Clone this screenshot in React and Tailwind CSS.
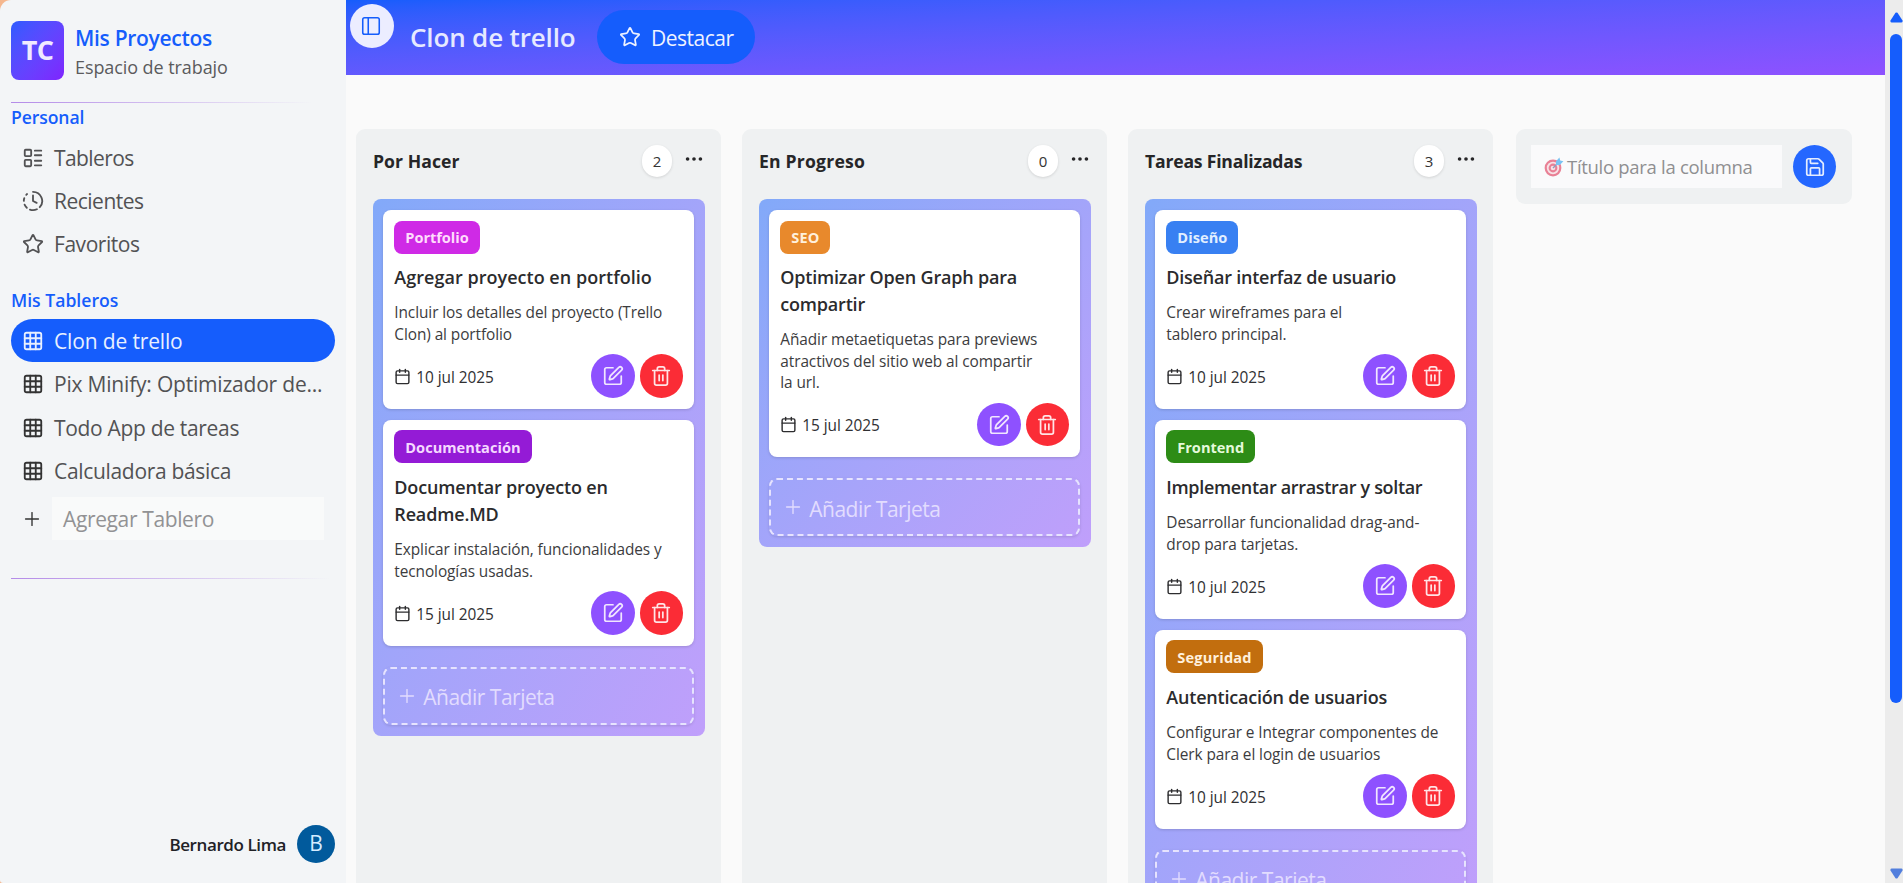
import React from 'react';
import {
  LayoutList,
  ClockFading,
  Star,
  Grid3x3,
  Plus,
  PanelLeft,
  Calendar,
  SquarePen,
  Trash2,
  Save,
  Ellipsis,
} from 'lucide-react';

const columns = [
  {
    title: 'Por Hacer',
    tracking: 'tracking-[0.05px]',
    count: 2,
    cards: [
      { tag: 'Portfolio', color: 'bg-[#cf2ae6]', tagText: 'text-[#ffdcfc] tracking-[-0.05px]', tracking: 'tracking-[0.03px]', title: ['Agregar proyecto en portfolio'], desc: ['Incluir los detalles del proyecto (Trello', 'Clon) al portfolio'], date: '10 jul 2025' },
      { tag: 'Documentación', color: 'bg-[#941bd6]', tagText: 'text-[#f5d9ff] tracking-[0px]', tracking: 'tracking-[-0.16px]', title: ['Documentar proyecto en', 'Readme.MD'], desc: ['Explicar instalación, funcionalidades y', 'tecnologías usadas.'], date: '15 jul 2025' },
    ],
  },
  {
    title: 'En Progreso',
    tracking: 'tracking-[0.2px]',
    count: 0,
    cards: [
      { tag: 'SEO', color: 'bg-[#e8892c]', tagText: 'text-[#fff0dc] tracking-[0.1px]', tracking: 'tracking-[-0.19px]', title: ['Optimizar Open Graph para', 'compartir'], desc: ['Añadir metaetiquetas para previews', 'atractivos del sitio web al compartir', 'la url.'], date: '15 jul 2025' },
    ],
  },
  {
    title: 'Tareas Finalizadas',
    tracking: 'tracking-[-0.2px]',
    count: 3,
    cards: [
      { tag: 'Diseño', color: 'bg-[#3880f2]', tagText: 'text-[#e2efff] tracking-[0.05px]', tracking: 'tracking-[-0.22px]', title: ['Diseñar interfaz de usuario'], desc: ['Crear wireframes para el', 'tablero principal.'], date: '10 jul 2025' },
      { tag: 'Frontend', color: 'bg-[#2d8c16]', tagText: 'text-[#e4fadc] tracking-[-0.03px]', tracking: 'tracking-[-0.32px]', title: ['Implementar arrastrar y soltar'], desc: ['Desarrollar funcionalidad drag-and-', 'drop para tarjetas.'], date: '10 jul 2025' },
      { tag: 'Seguridad', color: 'bg-[#c26e0e]', tagText: 'text-[#fff0dc] tracking-[0.18px]', tracking: 'tracking-[-0.2px]', title: ['Autenticación de usuarios'], desc: ['Configurar e Integrar componentes de', 'Clerk para el login de usuarios'], date: '10 jul 2025' },
    ],
  },
];

function NavItem({ icon: Icon, label, active, dark, tracking = 'tracking-[-0.45px]' }) {
  return (
    <li className={`flex h-[43px] w-[324px] items-center rounded-full pl-[11px] ${active ? 'bg-[#155dfc] text-[#e8f0ff]' : 'text-[#525254]'}`}>
      <Icon size={22} className={`shrink-0 ${dark ? 'text-[#333]' : ''}`} />
      <span className={`ml-[10px] whitespace-nowrap text-[21px] leading-[30px] ${tracking}`}>{label}</span>
    </li>
  );
}

function Card({ card }) {
  return (
    <article className="flex flex-col rounded-[8px] bg-white p-[11px] pt-[10.5px] shadow-[0_1px_3px_rgba(0,0,0,0.15)]">
      <span className={`flex h-[33px] items-center self-start rounded-[8px] px-[11px] pt-px text-[14.6px] font-bold ${card.color} ${card.tagText}`}>
        {card.tag}
      </span>
      <h3 className={`mt-[10.5px] text-[18px] font-semibold leading-[27px] text-[#2b2b2d] ${card.tracking}`}>
        {card.title.map((line) => <span key={line} className="block whitespace-nowrap">{line}</span>)}
      </h3>
      <p className="mt-[11.3px] text-[15.4px] leading-[21.4px] tracking-[-0.08px] text-[#3c3c3e]">
        {card.desc.map((line) => <span key={line} className="block whitespace-nowrap">{line}</span>)}
      </p>
      <div className="mt-[9.2px] flex h-[43.7px] items-center">
        <Calendar size={17} className="text-[#2d2d2f]" />
        <time className="ml-[5px] mt-[3px] text-[15.4px] leading-none tracking-[-0.05px] text-[#303032]">{card.date}</time>
        <button className="ml-auto flex size-[43.7px] items-center justify-center rounded-full bg-[#8e51ff] text-[#f0e6ff]">
          <SquarePen size={22} strokeWidth={1.9} />
        </button>
        <button className="ml-[5px] flex size-[43.5px] items-center justify-center rounded-full bg-[#fb2c36] text-[#ffe4e6]">
          <Trash2 size={22} strokeWidth={1.9} />
        </button>
      </div>
    </article>
  );
}

function Column({ column }) {
  return (
    <section className="w-[365px] shrink-0 self-stretch rounded-t-[9px] bg-[#eff1f2] px-[17px] pr-[16px] pt-[16px]">
      <header className="flex h-[32px] items-center">
        <h2 className={`mt-px whitespace-nowrap text-[17.6px] font-bold text-[#262628] ${column.tracking}`}>{column.title}</h2>
        <span className="ml-auto flex h-[32px] w-[30px] items-center justify-center rounded-full bg-white pt-px text-[15px] font-medium text-[#333] shadow-[0_1px_3px_rgba(0,0,0,0.12)]">
          {column.count}
        </span>
        <Ellipsis size={22} className="-mt-[5px] ml-[11px] text-[#262628]" />
      </header>
      <div className="mt-[22px] flex flex-col gap-[11px] rounded-[8px] bg-linear-to-br from-[#82a9f9] to-[#c09ffb] p-[11px] pl-[10.3px]">
        {column.cards.map((card) => <Card key={card.title[0]} card={card} />)}
        <button className="mt-[10px] flex h-[58px] shrink-0 items-center rounded-[8px] border-2 border-dashed border-[#e6e3fe] pl-[11px] text-[#e2dcfe] shadow-[0_1px_3px_rgba(0,0,0,0.12)]">
          <Plus size={22} strokeWidth={1.5} />
          <span className="ml-[5px] mt-[4px] text-[21px] leading-none tracking-[-0.5px]">Añadir Tarjeta</span>
        </button>
      </div>
    </section>
  );
}

function TargetIcon() {
  return (
    <svg viewBox="0 0 20 20" className="size-[20px] shrink-0 opacity-65">
      <circle cx="9" cy="11" r="8.4" fill="#e0405f" />
      <circle cx="9" cy="11" r="6.2" fill="#f6d6dc" />
      <circle cx="9" cy="11" r="4.4" fill="#e0405f" />
      <circle cx="9" cy="11" r="2.3" fill="#f6d6dc" />
      <path d="M9 11 15 5" stroke="#5a6b9a" strokeWidth="1.4" />
      <path d="M12 8V4.200L15.400.5l.8 3 3.200.8L15.800 8Z" fill="#35a5ee" />
    </svg>
  );
}

function Sidebar() {
  return (
    <aside className="flex h-full w-[346px] shrink-0 flex-col rounded-tl-[11px] rounded-bl-[3px] bg-[#f3f5f7] pl-[11px]">
      <div className="flex pt-[21px]">
        <div className="flex h-[59px] w-[53px] items-center justify-center rounded-[8px] bg-linear-to-br from-[#2b5bff] to-[#7f22fe] text-[27px] font-bold tracking-[-0.6px] text-[#f0eaff]">
          TC
        </div>
        <div className="ml-[11px] whitespace-nowrap">
          <p className="mt-[2px] text-[21px] font-semibold leading-[30px] tracking-[-0.3px] text-[#155dfc]">Mis Proyectos</p>
          <p className="mt-px text-[18px] leading-[26px] tracking-[-0.08px] text-[#5b5b5d]">Espacio de trabajo</p>
        </div>
      </div>
      <div className="mt-[22px] h-px w-[302px] bg-linear-to-r from-[#b48be8] to-transparent" />
      <h4 className="mt-px text-[17.6px] font-semibold leading-[26px] tracking-[-0.1px] text-[#155dfc]">Personal</h4>
      <ul className="mt-[6px]">
        <NavItem icon={LayoutList} label="Tableros" tracking="tracking-[-0.6px]" />
        <NavItem icon={ClockFading} label="Recientes" tracking="tracking-[-0.5px]" />
        <NavItem icon={Star} label="Favoritos" />
      </ul>
      <h4 className="mt-[22px] text-[17.6px] font-semibold leading-[26px] tracking-[0px] text-[#155dfc]">Mis Tableros</h4>
      <ul className="mt-[6px] flex flex-col gap-[0.5px]">
        <NavItem icon={Grid3x3} label="Clon de trello" active tracking="tracking-[-0.15px]" />
        <NavItem icon={Grid3x3} label="Pix Minify: Optimizador de..." dark tracking="tracking-[-0.2px]" />
        <NavItem icon={Grid3x3} label="Todo App de tareas" dark tracking="tracking-[-0.32px]" />
        <NavItem icon={Grid3x3} label="Calculadora básica" dark tracking="tracking-[-0.32px]" />
      </ul>
      <div className="mt-[4.5px] flex h-[43px] items-center">
        <Plus size={22} strokeWidth={1.5} className="ml-[10px] text-[#333]" />
        <div className="ml-[9px] flex h-[43px] w-[272px] items-center bg-[#f9fafa] pl-[11px] pt-[2px] text-[21px] tracking-[-0.37px] text-[#929294]">
          Agregar Tablero
        </div>
      </div>
      <div className="mt-[38px] h-px w-[320px] bg-linear-to-r from-[#b48be8] to-transparent" />
      <div className="mt-auto mb-[20px] flex items-center justify-end gap-[11px] pr-[11px]">
        <span className="mt-px text-[17px] font-semibold tracking-[-0.4px] text-[#212126]">Bernardo Lima</span>
        <span className="flex size-[38px] items-center justify-center rounded-full bg-[#015a9c] text-[21px] text-[#d5ecff]">B</span>
      </div>
    </aside>
  );
}

export default function App() {
  return (
    <div className="flex h-[883px] w-[1903px] overflow-hidden bg-[#fafafa] font-['Open_Sans',sans-serif]">
      <div className="h-full shrink-0 bg-linear-to-r from-[#f5b78e] from-[12px] to-[#fafafa] to-[13px]">
        <Sidebar />
      </div>
      <main className="flex min-w-0 flex-1 flex-col">
        <header className="flex h-[75px] shrink-0 bg-linear-to-br from-[#155dfc] to-[#8e51ff]">
          <button className="ml-[4px] mt-[4px] flex size-[44px] items-center justify-center rounded-full bg-[#ecedff] pr-[2px] text-[#155dfc]">
            <PanelLeft size={22} strokeWidth={1.7} />
          </button>
          <h1 className="ml-[16px] mt-[18px] w-[165px] whitespace-nowrap text-[26px] font-semibold leading-[38px] tracking-[-0.15px] text-[#e6e9ff]">Clon de trello</h1>
          <button className="ml-[22px] mt-[10px] flex h-[54px] w-[158px] items-center rounded-full bg-[#155dfc] pl-[22px] text-[#eef2ff]">
            <Star size={22} strokeWidth={1.9} className="-mt-px" />
            <span className="ml-[10px] mt-[3px] text-[21px] font-medium tracking-[-0.5px]">Destacar</span>
          </button>
        </header>
        <div className="flex min-h-0 flex-1 gap-[21px] pl-[10px] pt-[54px]">
          {columns.map((column) => <Column key={column.title} column={column} />)}
          <section className="ml-[2px] flex h-[75px] w-[336px] shrink-0 items-center self-start rounded-[9px] bg-[#eff1f2] pl-[15px]">
            <div className="flex h-[43px] w-[251px] items-center bg-[#fafafb] pl-[13px] text-[18.5px] tracking-[-0.3px] text-[#8f8f91]">
              <TargetIcon />
              <span className="ml-[3px] whitespace-nowrap">Título para la columna</span>
            </div>
            <button className="ml-[11px] flex size-[43px] items-center justify-center rounded-full bg-[#2467ff] text-[#e4edff]">
              <Save size={22} strokeWidth={1.9} />
            </button>
          </section>
        </div>
      </main>
      <div className="flex h-full w-[18px] shrink-0 flex-col items-center bg-[#ececec] pl-[4px]">
        <svg viewBox="0 0 13 11" className="mt-[12px] h-[11px] w-[13px] shrink-0" fill="#155dfc">
          <path d="M5.5.8Q6.500 0 7.500.8L12.500 8.500Q13 10.500 11.500 10.500H1.500Q0 10.500.5 8.500Z" />
        </svg>
        <div className="mt-[11px] h-[669px] w-[12px] shrink-0 rounded-full bg-[#155dfc]" />
        <svg viewBox="0 0 13 11" className="mb-[4px] mt-auto h-[11px] w-[13px] shrink-0" fill="#527fdd">
          <path d="M5.500 10.200Q6.500 11 7.500 10.200L12.500 2.500Q13 .5 11.500.5H1.500Q0 .5.5 2.500Z" />
        </svg>
      </div>
    </div>
  );
}
